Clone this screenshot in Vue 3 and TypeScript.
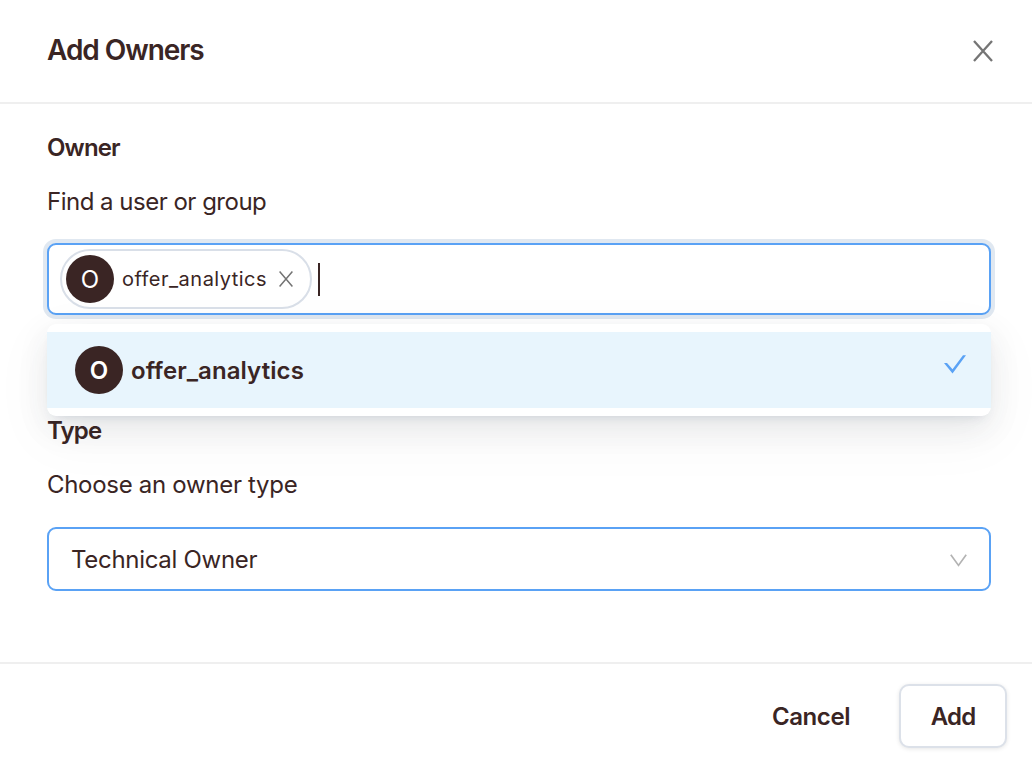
<script setup lang="ts">
import { ref } from 'vue'

interface Owner {
  name: string
  initial: string
}

const selected = ref<Owner[]>([{ name: 'offer_analytics', initial: 'O' }])
const options = ref<Owner[]>([{ name: 'offer_analytics', initial: 'O' }])
const ownerType = ref<string>('Technical Owner')
</script>

<template>
  <div class="modal">
    <header class="header">
      <h1 class="title">Add Owners</h1>
      <svg class="close" width="20" height="22" viewBox="0 0 20 22">
        <path d="M1 1 L19 21 M19 1 L1 21" fill="none" stroke="#757575" stroke-width="2.3" />
      </svg>
    </header>

    <main class="body">
      <h2 class="label">Owner</h2>
      <p class="hint hint-find">Find a user or group</p>
      <div class="owner-field">
        <div v-for="o in selected" :key="o.name" class="chip">
          <span class="avatar">{{ o.initial }}</span>
          <span class="chip-name">{{ o.name }}</span>
          <svg class="chip-close" width="14" height="16" viewBox="0 0 14 16">
            <path d="M.6 .6 L13.4 15.4 M13.4 .6 L.6 15.4" fill="none" stroke="#737373" stroke-width="1.5" />
          </svg>
        </div>
        <span class="caret"></span>
        <div class="dropdown">
          <div v-for="o in options" :key="o.name" class="option">
            <span class="avatar avatar-bold">{{ o.initial }}</span>
            <span class="option-name">{{ o.name }}</span>
            <svg class="check" width="22" height="19" viewBox="0 0 22 19">
              <path d="M0 8 H3 L8.5 14.2 L19 .3 H22 L8.5 18.4 Z" fill="#5aa2f5" />
            </svg>
          </div>
        </div>
      </div>

      <h2 class="label type-label">Type</h2>
      <p class="hint">Choose an owner type</p>
      <div class="select">
        <span class="select-value">{{ ownerType }}</span>
        <svg class="chevron" width="17" height="13" viewBox="0 0 17 13">
          <path d="M.8 .8 L8.5 11.4 L16.2 .8" fill="none" stroke="#b3b3b3" stroke-width="1.7" />
        </svg>
      </div>
    </main>

    <footer class="footer">
      <button class="cancel">Cancel</button>
      <button class="add">Add</button>
    </footer>
  </div>
</template>

<style>
body {
  margin: 0;
  background: #fff;
}
</style>

<style scoped>
.modal,
.modal * {
  box-sizing: border-box;
}
.modal {
  width: 1032px;
  height: 761px;
  display: flex;
  flex-direction: column;
  overflow: hidden;
  background: #fff;
  color: #3a2524;
  font-family: Inter, "Liberation Sans", sans-serif;
  font-size: 24px;
}
.header {
  height: 104px;
  flex: none;
  display: flex;
  justify-content: space-between;
  align-items: flex-start;
  padding: 30px 39px 0 47px;
  border-bottom: 2px solid #efefef;
}
.title {
  margin: 0;
  font-size: 28px;
  line-height: 40px;
  font-weight: 600;
  letter-spacing: -1.05px;
}
.close {
  margin-top: 10px;
}
.body {
  height: 558px;
  flex: none;
  padding: 24px 41px 0 47px;
}
.label {
  margin: 0;
  height: 40px;
  font-size: 24px;
  line-height: 40px;
  font-weight: 600;
  letter-spacing: -0.85px;
}
.hint {
  margin: 14px 0 0;
  height: 40px;
  line-height: 40px;
  letter-spacing: -0.3px;
}
.hint-find {
  letter-spacing: -0.5px;
}
.owner-field {
  position: relative;
  margin-top: 21px;
  height: 72px;
  display: flex;
  align-items: center;
  padding-left: 11px;
  border: 2px solid #5aa2f5;
  border-radius: 9px;
  background: #fff;
  box-shadow: 0 0 0 4px #e0e8f1;
}
.chip {
  width: 252px;
  height: 60px;
  display: flex;
  align-items: center;
  padding-left: 4px;
  border: 2px solid #d9dfe8;
  border-radius: 30px;
}
.avatar {
  width: 48px;
  height: 48px;
  flex: none;
  border-radius: 50%;
  background: #3a2524;
  color: #fff;
  font-size: 24px;
  line-height: 49px;
  text-align: center;
}
.avatar-bold {
  font-weight: 600;
}
.chip-name {
  width: 165px;
  flex: none;
  padding-left: 8px;
  font-size: 20px;
  letter-spacing: 0.48px;
  white-space: nowrap;
}
.chip-close {
  flex: none;
}
.caret {
  width: 2px;
  height: 33px;
  margin-left: 6px;
  background: #3a2524;
}
.dropdown {
  position: absolute;
  z-index: 1;
  top: 79px;
  left: -2px;
  width: 944px;
  height: 92px;
  padding: 8px 0;
  border-radius: 9px;
  background: #fff;
  box-shadow: 0 6px 12px -8px rgba(60, 80, 120, 0.24), 0 12px 32px rgba(40, 50, 70, 0.09), 0 18px 56px 8px rgba(0, 0, 0, 0.035);
}
.option {
  height: 76px;
  display: flex;
  align-items: center;
  padding: 0 25px 0 28px;
  background: #e8f5fd;
}
.option-name {
  flex: 1;
  padding-left: 8px;
  font-weight: 600;
  letter-spacing: 0.07px;
}
.check {
  margin-top: -12px;
}
.type-label {
  margin-top: 96px;
}
.select {
  margin-top: 22px;
  height: 64px;
  display: flex;
  align-items: center;
  justify-content: space-between;
  padding: 0 22px;
  border: 2px solid #5aa2f5;
  border-radius: 9px;
  letter-spacing: -0.3px;
}
.chevron {
  margin-top: 3px;
}
.footer {
  height: 99px;
  flex: none;
  display: flex;
  justify-content: flex-end;
  padding: 20px 25px 0 0;
  border-top: 2px solid #efefef;
}
button {
  height: 64px;
  padding: 0;
  font: inherit;
  font-weight: 600;
  color: inherit;
  background: #fff;
  border: none;
}
.cancel {
  width: 128px;
  margin-right: 24px;
  letter-spacing: -0.4px;
}
.add {
  width: 108px;
  border: 2px solid #dce1e9;
  border-radius: 10px;
  box-shadow: 0 1px 4px rgba(0, 0, 0, 0.1);
  letter-spacing: -0.8px;
}
</style>
